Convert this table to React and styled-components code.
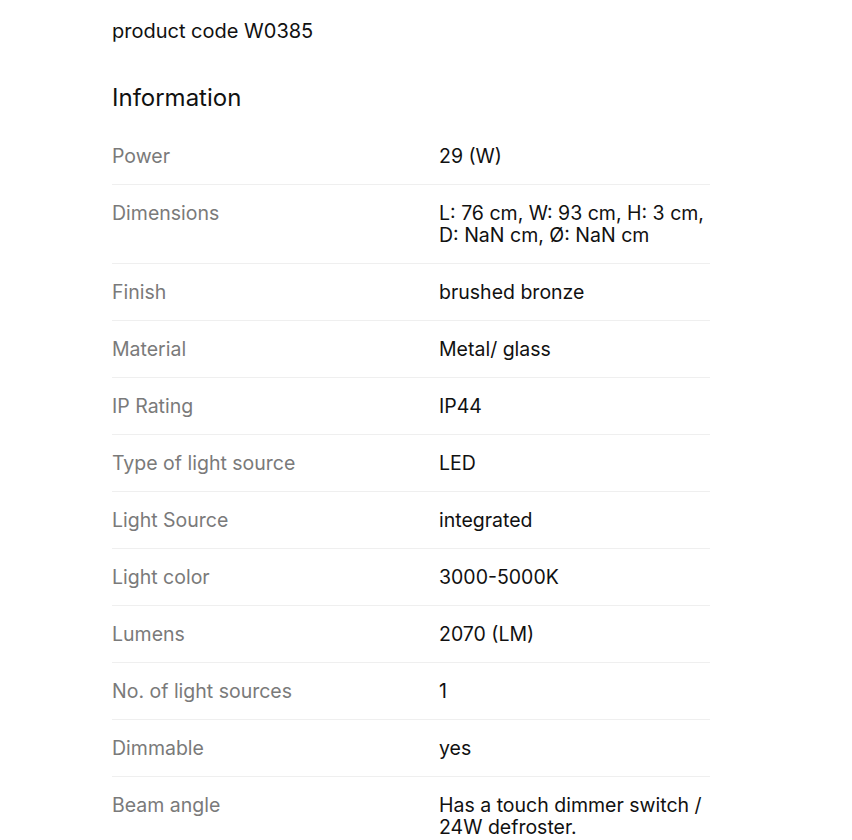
import React from "react";
import styled, { createGlobalStyle } from "styled-components";

const GlobalStyle = createGlobalStyle`
  body {
    margin: 0;
    background: #fff;
    font-family: "Inter", "Liberation Sans", sans-serif;
    color: #111;
  }
`;

const Page = styled.div`
  padding: 18px 0 0 112px;
  width: 598px;
`;

const Code = styled.p`
  margin: 0;
  font-size: 20px;
  line-height: 26px;
  color: #111;
`;

const Heading = styled.h3`
  margin: 38px 0 14px;
  font-size: 24px;
  line-height: 32px;
  font-weight: 400;
  color: #111;
`;

const Table = styled.div`
  display: flex;
  flex-direction: column;
`;

const Row = styled.div`
  display: grid;
  grid-template-columns: 327px 1fr;
  padding: 17px 0;
  border-bottom: ${(p) => (p.last ? "none" : "1px solid #efefef")};
  font-size: 19.5px;
  line-height: 22px;
`;

const Label = styled.div`
  color: #7a7a7a;
`;

const Value = styled.div`
  color: #111;
`;

const specs = [
  ["Power", "29 (W)"],
  ["Dimensions", "L: 76 cm, W: 93 cm, H: 3 cm, D: NaN cm, Ø: NaN cm"],
  ["Finish", "brushed bronze"],
  ["Material", "Metal/ glass"],
  ["IP Rating", "IP44"],
  ["Type of light source", "LED"],
  ["Light Source", "integrated"],
  ["Light color", "3000-5000K"],
  ["Lumens", "2070 (LM)"],
  ["No. of light sources", "1"],
  ["Dimmable", "yes"],
  ["Beam angle", "Has a touch dimmer switch / 24W defroster."],
];

export default function App() {
  return (
    <>
      <GlobalStyle />
      <Page>
        <Code>product code W0385</Code>
        <Heading>Information</Heading>
        <Table>
          {specs.map(([label, value], i) => (
            <Row key={label} last={i === specs.length - 1}>
              <Label>{label}</Label>
              <Value>{value}</Value>
            </Row>
          ))}
        </Table>
      </Page>
    </>
  );
}
